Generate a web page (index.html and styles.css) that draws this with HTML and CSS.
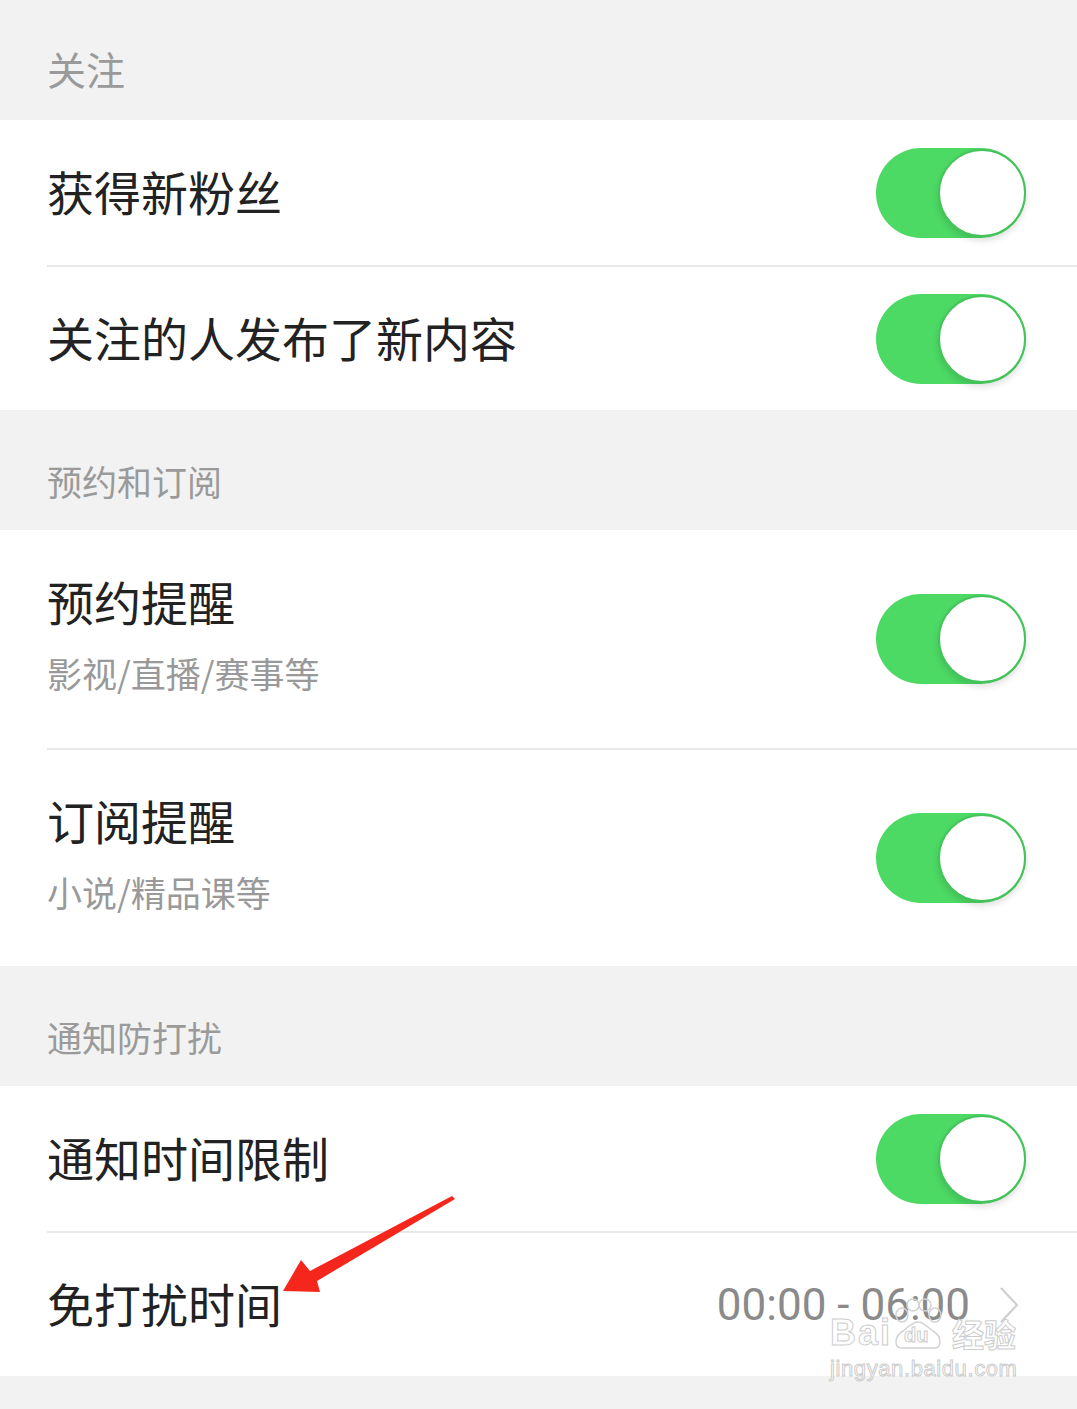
FILE: index.html
```html
<!DOCTYPE html>
<html lang="zh-CN">
<head>
    <meta charset="UTF-8">
    <meta name="viewport" content="width=device-width, initial-scale=1.0">
    <title>通知设置</title>
    <link rel="stylesheet" href="styles.css">
</head>
<body>
    <div class="page">
        <div class="group-title first">关注</div>
        <div class="group">
            <div class="cell">
                <span class="cell-title">获得新粉丝</span>
                <span class="switch on"></span>
            </div>
            <div class="cell">
                <span class="cell-title">关注的人发布了新内容</span>
                <span class="switch on"></span>
            </div>
        </div>

        <div class="group-title">预约和订阅</div>
        <div class="group">
            <div class="cell tall">
                <div class="cell-text">
                    <span class="cell-title">预约提醒</span>
                    <span class="cell-sub">影视/直播/赛事等</span>
                </div>
                <span class="switch on"></span>
            </div>
            <div class="cell tall">
                <div class="cell-text">
                    <span class="cell-title">订阅提醒</span>
                    <span class="cell-sub">小说/精品课等</span>
                </div>
                <span class="switch on"></span>
            </div>
        </div>

        <div class="group-title">通知防打扰</div>
        <div class="group">
            <div class="cell">
                <span class="cell-title">通知时间限制</span>
                <span class="switch on"></span>
            </div>
            <div class="cell">
                <span class="cell-title">免打扰时间</span>
                <span class="cell-value">
                    00:00 - 06:00
                    <svg class="chevron" width="22" height="40" viewBox="0 0 22 40">
                        <polyline points="3,3 19,20 3,37" fill="none" stroke="#cfcfcf" stroke-width="2.2"/>
                    </svg>
                </span>
            </div>
        </div>
        <div class="bottom"></div>

        <!-- red arrow drawn on top of the screenshot -->
        <svg class="arrow" width="1077" height="1409" viewBox="0 0 1077 1409">
            <polygon points="452,1196 455,1199 317,1281 320,1292 283,1291 301,1260 310,1271" fill="#f5261c"/>
        </svg>

        <!-- watermark -->
        <div class="watermark">
            <div class="wm-logo">
                <span class="wm-bai">Bai</span>
                <span class="wm-paw">
                    <svg width="48" height="54" viewBox="0 0 48 54">
                        <g fill="none" stroke="#d2d2d2" stroke-width="1.5">
                            <ellipse cx="8" cy="17" rx="6" ry="7"/>
                            <ellipse cx="19" cy="7" rx="6" ry="6"/>
                            <ellipse cx="31" cy="7" rx="6" ry="6"/>
                            <ellipse cx="41" cy="17" rx="6" ry="7"/>
                            <path d="M7 50 C0 50 0 38 9 33 C15 29 18 24 24 24 C30 24 33 29 39 33 C48 38 48 50 41 50 Z"/>
                        </g>
                    </svg>
                </span>
                <span class="wm-du">du</span>
                <span class="wm-cn">经验</span>
            </div>
            <div class="wm-url">jingyan.baidu.com</div>
        </div>
    </div>
</body>
</html>
```

FILE: styles.css
```css
body {
    margin: 0;
    padding: 0;
    background-color: #f2f2f2;
    font-family: "Noto Sans CJK SC", "Noto Sans", sans-serif;
}

.page {
    position: relative;
    width: 1077px;
    height: 1409px;
    overflow: hidden;
    background-color: #f2f2f2;
}

.group-title {
    height: 120px;
    box-sizing: border-box;
    padding: 51px 0 0 47px;
    font-size: 35px;
    line-height: 40px;
    color: #9a9a9a;
}

.group-title.first {
    padding-top: 46px;
    font-size: 39px;
    line-height: 44px;
}

.group {
    background-color: #fff;
}

.cell {
    display: flex;
    align-items: center;
    justify-content: space-between;
    margin-left: 47px;
    padding-right: 51px;
    height: 145px;
    box-sizing: border-box;
}

.cell + .cell {
    border-top: 2px solid #e8e8e8;
}

.cell-title {
    font-size: 47px;
    line-height: 56px;
    color: #222;
    padding-bottom: 4px;
}

.cell.tall {
    height: 218px;
}

.cell-text {
    display: flex;
    flex-direction: column;
    gap: 22px;
    padding-bottom: 10px;
}

.cell-text .cell-title {
    padding-bottom: 0;
}

.cell-sub {
    font-size: 35px;
    line-height: 44px;
    color: #999;
}

.switch {
    position: relative;
    width: 150px;
    height: 90px;
    border-radius: 45px;
    background-color: #4cd964;
    flex-shrink: 0;
}

.switch.on::after {
    content: "";
    position: absolute;
    top: 1px;
    right: 0;
    width: 84px;
    height: 84px;
    border-radius: 50%;
    background-color: #fff;
    border: 2px solid #45c35b;
    box-shadow: 0 4px 6px rgba(0, 0, 0, 0.12);
}

.cell-value {
    display: flex;
    align-items: center;
    gap: 28px;
    margin-right: 6px;
    font-family: Roboto, "Noto Sans", sans-serif;
    font-size: 44px;
    color: #8a8a8a;
}

.chevron {
    display: block;
}

.bottom {
    height: 34px;
}

.arrow {
    position: absolute;
    left: 0;
    top: 0;
    pointer-events: none;
}

.watermark {
    position: absolute;
    left: 830px;
    top: 1298px;
    width: 200px;
    color: rgba(255, 255, 255, 0.5);
    -webkit-text-stroke: 1px #cdcdcd;
    pointer-events: none;
}

.wm-logo {
    position: relative;
    display: flex;
    align-items: flex-end;
    height: 54px;
}

.wm-bai {
    font-family: "Liberation Sans", sans-serif;
    font-weight: bold;
    font-size: 36px;
    line-height: 38px;
    letter-spacing: 2px;
}

.wm-paw {
    width: 48px;
    height: 54px;
    margin: 0 10px 0 2px;
}

.wm-paw svg {
    display: block;
}

.wm-du {
    position: absolute;
    left: 74px;
    bottom: 5px;
    font-family: "Liberation Sans", sans-serif;
    font-weight: bold;
    font-size: 20px;
}

.wm-cn {
    font-size: 32px;
    line-height: 38px;
    font-weight: bold;
}

.wm-url {
    margin-top: 4px;
    font-family: "Liberation Sans", sans-serif;
    font-size: 22px;
    letter-spacing: 0.6px;
}
```
